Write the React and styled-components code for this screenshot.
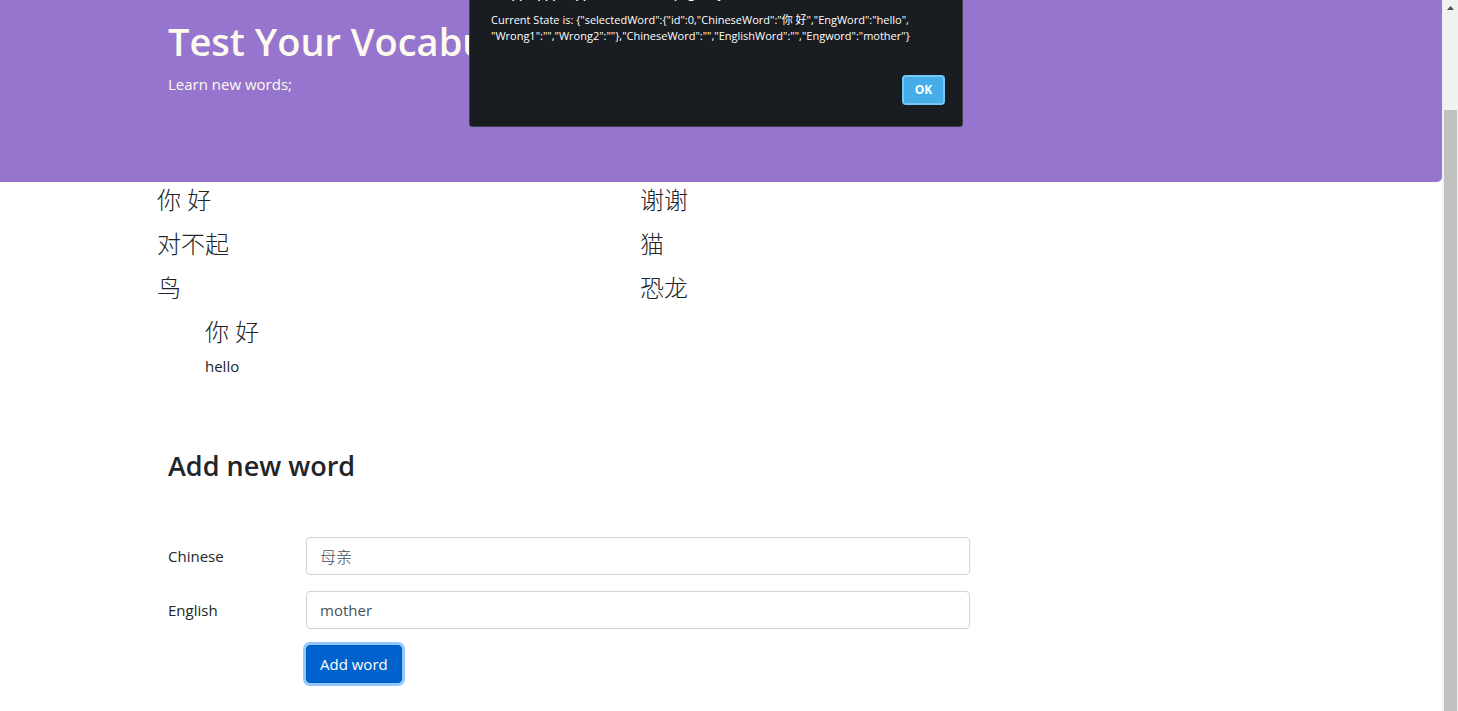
import React from "react";
import styled, { createGlobalStyle } from "styled-components";

const sans = '"Open Sans", "Noto Sans", "Noto Sans CJK SC", sans-serif';

const GlobalStyle = createGlobalStyle`
  *, *::before, *::after { box-sizing: border-box; }
  html { overflow: hidden; }
  body {
    margin: 0;
    background: #fff;
    color: #212529;
    font-family: ${sans};
    font-size: 16px;
    line-height: 24px;
  }
  h1, h2, h3, p, ul { margin: 0; padding: 0; }
`;

const Shell = styled.div`
  display: grid;
  grid-template-columns: minmax(0, 1fr) 16px;
  height: 100vh;
`;

const Page = styled.div`
  overflow: hidden;
`;

const Container = styled.div`
  max-width: 1140px;
  margin: 0 auto;
  padding: 0 17px;
`;

const Banner = styled.header`
  padding: 17px 0 86px;
  border-radius: 0 0 5px 0;
  background: #9575cd;
  color: #fffaf0;
`;

const BannerTitle = styled.h1`
  margin-bottom: 7px;
  font-size: 38px;
  font-weight: 600;
  line-height: 48px;
`;

const BannerText = styled.p`
  font-size: 15px;
`;

const Words = styled.ul`
  display: grid;
  grid-template-columns: 483px 1fr;
  list-style: none;
  max-width: 1128px;
  margin: 0 auto;
`;

const Word = styled.h3`
  height: 44px;
  font-size: 24px;
  font-weight: 300;
  line-height: 36px;
`;

const Selected = styled.section`
  max-width: 1128px;
  margin: 0 auto;
  padding: 0 48px 72px;
  font-size: 15px;

  h3 { height: 40px; }
`;

const FormTitle = styled.h2`
  margin-bottom: 55px;
  font-size: 27px;
  font-weight: 600;
  line-height: 32px;
`;

const Form = styled.form`
  display: grid;
  gap: 16px;
  max-width: 802px;
`;

const FormRow = styled.div`
  display: grid;
  grid-template-columns: 138px minmax(0, 1fr);
  align-items: center;
`;

const Label = styled.label`
  font-size: 15px;
`;

const Input = styled.input`
  width: 100%;
  height: 38px;
  padding: 6px 13px;
  border: 1px solid #ced4da;
  border-radius: 4px;
  background: #fff;
  color: #495057;
  font: ${(props) => (props.$light ? "300 16px" : "400 15px")}/24px ${sans};
  outline: none;
`;

const SubmitButton = styled.button`
  grid-column: 2;
  justify-self: start;
  height: 38px;
  padding: 0 13px;
  border: 1px solid #005cbf;
  border-radius: 4px;
  background: #0062cc;
  box-shadow: 0 0 0 3px #94c6ff;
  color: #fff;
  font: 15px/24px ${sans};
`;

const Dialog = styled.div`
  position: fixed;
  top: -24px;
  left: calc(50% - 260px);
  width: 494px;
  min-height: 151px;
  display: flex;
  flex-direction: column;
  padding: 7px 17px 21px 21px;
  border: 1px solid #3b4046;
  border-radius: 3px;
  background: #191c20;
  color: #fff;
`;

const DialogTitle = styled.h2`
  margin-bottom: 8px;
  font-size: 12px;
  font-weight: 600;
  line-height: 20px;
`;

const DialogText = styled.p`
  font-size: 11px;
  line-height: 16px;
  white-space: pre-line;
`;

const OkButton = styled.button`
  align-self: flex-end;
  margin-top: auto;
  width: 43px;
  height: 30px;
  padding: 0;
  border: 2px solid #74c8f5;
  border-radius: 4px;
  background: #45aee8;
  color: #fff;
  font: 700 12px/16px ${sans};
`;

const ScrollTrack = styled.div`
  display: flex;
  flex-direction: column;
  align-items: center;
  background: #f1f1f1;

  svg { display: block; height: 17px; margin-bottom: 93px; }
`;

const ScrollThumb = styled.div`
  flex: 1;
  width: 13px;
  background: #c1c1c1;
`;

const words = ["你 好", "谢谢", "对不起", "猫", "鸟", "恐龙"];

const stateText = `Current State is: {"selectedWord":{"id":0,"ChineseWord":"你 好","EngWord":"hello",
"Wrong1":"","Wrong2":""},"ChineseWord":"","EnglishWord":"","Engword":"mother"}`;

export default function App() {
  return (
    <>
      <GlobalStyle />
      <Shell>
        <Page>
          <Banner>
            <Container>
              <BannerTitle>Test Your Vocabulary</BannerTitle>
              <BannerText>Learn new words;</BannerText>
            </Container>
          </Banner>
          <main>
            <Words>
              {words.map((word) => (
                <li key={word}><Word>{word}</Word></li>
              ))}
            </Words>
            <Selected>
              <Word>你 好</Word>
              <p>hello</p>
            </Selected>
            <Container>
              <FormTitle>Add new word</FormTitle>
              <Form onSubmit={(e) => e.preventDefault()}>
                <FormRow>
                  <Label htmlFor="chinese">Chinese</Label>
                  <Input id="chinese" $light defaultValue="母亲" />
                </FormRow>
                <FormRow>
                  <Label htmlFor="english">English</Label>
                  <Input id="english" defaultValue="mother" />
                </FormRow>
                <FormRow>
                  <SubmitButton type="submit">Add word</SubmitButton>
                </FormRow>
              </Form>
            </Container>
          </main>
        </Page>
        <ScrollTrack aria-hidden="true">
          <svg width="16" height="17" viewBox="0 0 16 17">
            <path d="M5 10 L8.500 6 L12 10 Z" fill="#505050" />
          </svg>
          <ScrollThumb />
        </ScrollTrack>
      </Shell>
      <Dialog role="alertdialog" aria-labelledby="dialog-title">
        <DialogTitle id="dialog-title">snapp-appp-tapp.codesandbox.page says</DialogTitle>
        <DialogText>{stateText}</DialogText>
        <OkButton type="button">OK</OkButton>
      </Dialog>
    </>
  );
}
